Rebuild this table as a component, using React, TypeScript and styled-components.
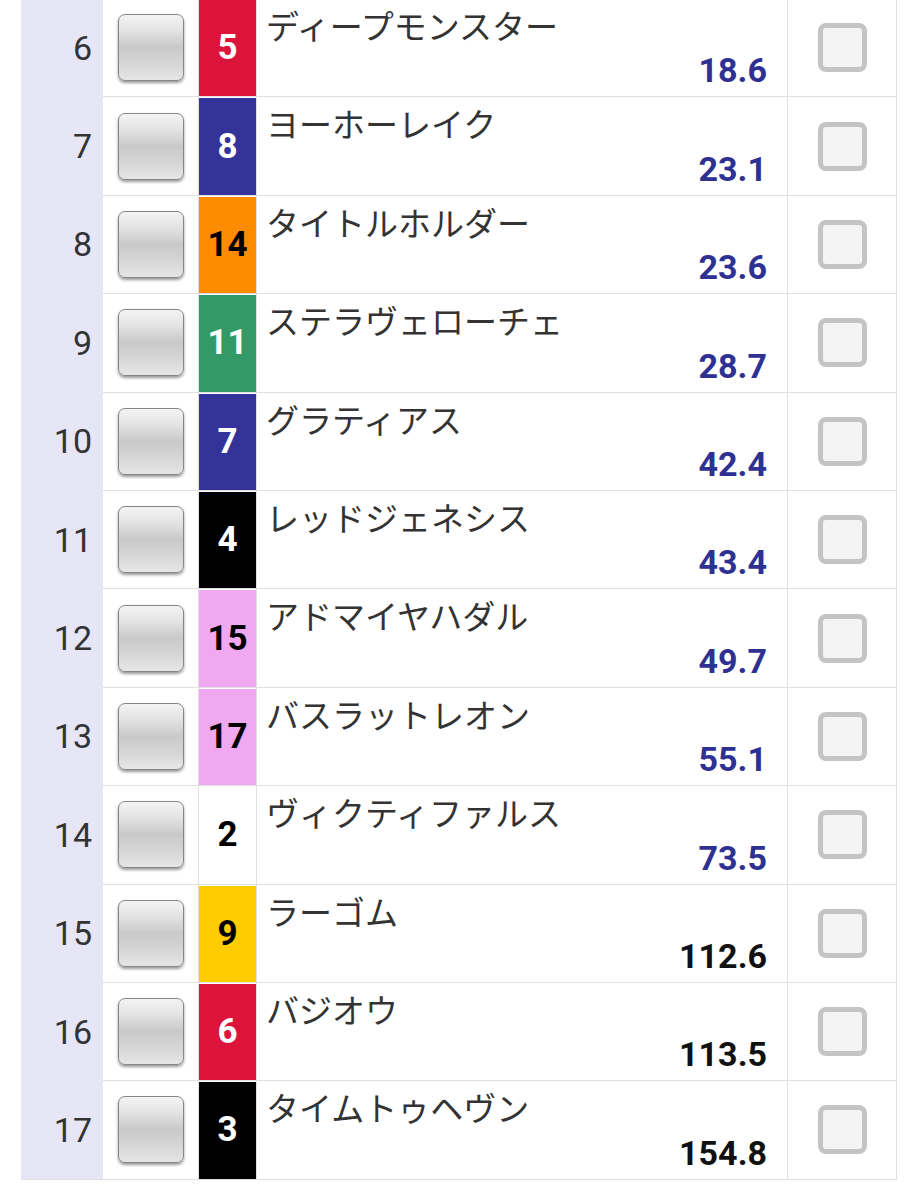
import React from "react";
import styled, { createGlobalStyle } from "styled-components";

const GlobalStyle = createGlobalStyle`
  html, body { margin: 0; padding: 0; background: #ffffff; }
  body { font-family: Roboto, "Noto Sans CJK JP", sans-serif; overflow: hidden; }
`;

type Horse = {
  rank: number;
  num: number;
  name: string;
  odds: string;
  bg: string;
  fg: string;
};

const horses: Horse[] = [
  { rank: 6, num: 5, name: "ディープモンスター", odds: "18.6", bg: "#dc143c", fg: "#ffffff" },
  { rank: 7, num: 8, name: "ヨーホーレイク", odds: "23.1", bg: "#333399", fg: "#ffffff" },
  { rank: 8, num: 14, name: "タイトルホルダー", odds: "23.6", bg: "#ff8c00", fg: "#000000" },
  { rank: 9, num: 11, name: "ステラヴェローチェ", odds: "28.7", bg: "#339966", fg: "#ffffff" },
  { rank: 10, num: 7, name: "グラティアス", odds: "42.4", bg: "#333399", fg: "#ffffff" },
  { rank: 11, num: 4, name: "レッドジェネシス", odds: "43.4", bg: "#000000", fg: "#ffffff" },
  { rank: 12, num: 15, name: "アドマイヤハダル", odds: "49.7", bg: "#f0a8f0", fg: "#000000" },
  { rank: 13, num: 17, name: "バスラットレオン", odds: "55.1", bg: "#f0a8f0", fg: "#000000" },
  { rank: 14, num: 2, name: "ヴィクティファルス", odds: "73.5", bg: "#ffffff", fg: "#000000" },
  { rank: 15, num: 9, name: "ラーゴム", odds: "112.6", bg: "#ffcc00", fg: "#000000" },
  { rank: 16, num: 6, name: "バジオウ", odds: "113.5", bg: "#dc143c", fg: "#ffffff" },
  { rank: 17, num: 3, name: "タイムトゥヘヴン", odds: "154.8", bg: "#000000", fg: "#ffffff" },
];

const Table = styled.div`
  margin: -1px 0 0 21px;
  width: 876px;
  display: flex;
  flex-direction: column;
`;

const Row = styled.div`
  display: grid;
  grid-template-columns: 82px 96px 58px 531px 109px;
  height: 98.4px;
`;

const BorderedCell = styled.div`
  box-sizing: border-box;
  border-right: 1px solid #e0e0e0;
  border-bottom: 1px solid #e0e0e0;
`;

const RankCell = styled.div<{ $last: boolean }>`
  box-sizing: border-box;
  background: #e6e6f7;
  border-bottom: 1px solid ${(p) => (p.$last ? "#e0e0e0" : "#e6e6f7")};
  display: flex;
  align-items: center;
  justify-content: flex-end;
  padding-right: 11px;
  font-family: Roboto, sans-serif;
  font-size: 34px;
  color: #333333;
`;

const ButtonCell = styled(BorderedCell)`
  display: flex;
  align-items: center;
  justify-content: center;
`;

const GelButton = styled.div`
  box-sizing: border-box;
  width: 66px;
  height: 67px;
  margin-left: 1px;
  border: 1.5px solid #858585;
  border-radius: 7px;
  background: linear-gradient(
    to bottom,
    #f4f4f4 0%,
    #e2e2e2 25%,
    #c9c9c9 50%,
    #d6d6d6 75%,
    #e6e6e6 100%
  );
  box-shadow: 0 2px 3px rgba(0, 0, 0, 0.4);
`;

const NumCell = styled(BorderedCell)<{ $bg: string; $fg: string }>`
  background: ${(p) => p.$bg};
  color: ${(p) => p.$fg};
  box-shadow: inset 0 1px 0 #ffffff;
  display: flex;
  align-items: center;
  justify-content: center;
  font-family: Roboto, sans-serif;
  font-weight: 700;
  font-size: 35px;
`;

const NameCell = styled(BorderedCell)`
  display: flex;
  flex-direction: column;
  padding: 10px 20px 9px 9px;
`;

const HorseName = styled.div`
  font-family: "Noto Sans CJK JP", sans-serif;
  font-size: 33px;
  line-height: 33px;
  color: #333333;
  white-space: nowrap;
`;

const Odds = styled.div<{ $high: boolean }>`
  margin-top: auto;
  align-self: flex-end;
  font-family: Roboto, sans-serif;
  font-weight: 700;
  font-size: 34px;
  line-height: 34px;
  color: ${(p) => (p.$high ? "#111111" : "#2e3192")};
`;

const CheckCell = styled(BorderedCell)`
  display: flex;
  align-items: center;
  justify-content: center;
`;

const CheckBox = styled.div`
  box-sizing: border-box;
  width: 49px;
  height: 49px;
  margin-left: 1px;
  border: 5px solid #c4c4c4;
  border-radius: 8px;
  background: #f4f4f4;
`;

export default function App() {
  return (
    <>
      <GlobalStyle />
      <Table>
        {horses.map((h, i) => (
          <Row key={h.rank}>
            <RankCell $last={i === horses.length - 1}>{h.rank}</RankCell>
            <ButtonCell>
              <GelButton />
            </ButtonCell>
            <NumCell $bg={h.bg} $fg={h.fg}>
              {h.num}
            </NumCell>
            <NameCell>
              <HorseName>{h.name}</HorseName>
              <Odds $high={parseFloat(h.odds) >= 100}>{h.odds}</Odds>
            </NameCell>
            <CheckCell>
              <CheckBox />
            </CheckCell>
          </Row>
        ))}
      </Table>
    </>
  );
}
